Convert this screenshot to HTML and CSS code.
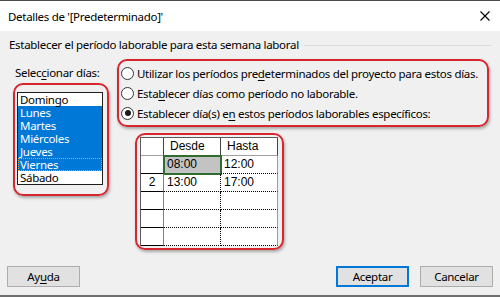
FILE: index.html
```html
<!DOCTYPE html>
<html>
<head>
<meta charset="utf-8">
<title>Detalles de '[Predeterminado]'</title>
<link rel="stylesheet" href="styles.css">
</head>
<body>
<div class="titlebar">
  <span class="title">Detalles de '[Predeterminado]'</span>
  <svg class="close" width="10" height="10" viewBox="0 0 10 10">
    <path d="M0.5 0.5 L9.5 9.5 M9.5 0.5 L0.5 9.5" stroke="#000" stroke-width="1.1" fill="none"/>
  </svg>
</div>

<div class="dialog">
  <div class="group-title">
    <span>Establecer el período laborable para esta semana laboral</span>
    <div class="rule"></div>
  </div>

  <div class="main">
    <div class="days">
      <div class="days-label">Selec<u>c</u>ionar días:</div>
      <div class="mark mark-days">
        <ul class="listbox">
          <li>Domingo</li>
          <li class="sel">Lunes</li>
          <li class="sel">Martes</li>
          <li class="sel">Miércoles</li>
          <li class="sel">Jueves</li>
          <li class="sel focus">Viernes</li>
          <li>Sábado</li>
        </ul>
      </div>
    </div>

    <div class="options">
      <div class="mark mark-radios">
        <div class="radio"><span class="dot"></span><span>Utilizar los períodos pre<u>d</u>eterminados del proyecto para estos días.</span></div>
        <div class="radio"><span class="dot"></span><span>Esta<u>b</u>lecer días como período no laborable.</span></div>
        <div class="radio"><span class="dot on"></span><span>Establecer día(s) e<u>n</u> estos períodos laborables específicos:</span></div>
      </div>

      <div class="mark mark-grid">
        <div class="grid">
          <div class="cell corner"></div>
          <div class="cell head">Desde</div>
          <div class="cell head">Hasta</div>

          <div class="cell rowhead"></div>
          <div class="cell data current">08:00</div>
          <div class="cell data last">12:00</div>

          <div class="cell rowhead">2</div>
          <div class="cell data">13:00</div>
          <div class="cell data last">17:00</div>

          <div class="cell rowhead"></div>
          <div class="cell data"></div>
          <div class="cell data last"></div>

          <div class="cell rowhead"></div>
          <div class="cell data"></div>
          <div class="cell data last"></div>

          <div class="cell rowhead"></div>
          <div class="cell data"></div>
          <div class="cell data last"></div>
        </div>
      </div>
    </div>
  </div>

  <div class="buttons">
    <button class="btn">Ay<u>u</u>da</button>
    <div class="spacer"></div>
    <button class="btn primary">Aceptar</button>
    <button class="btn">Cancelar</button>
  </div>
</div>
</body>
</html>
```

FILE: styles.css
```css
body {
  margin: 0;
  width: 500px;
  height: 297px;
  overflow: hidden;
  background: #f0f0f0;
  color: #000;
  font-family: "Noto Sans", sans-serif;
  font-size: 11.5px;
  letter-spacing: -0.3px;
}

u { text-underline-offset: 2px; }

/* window caption */
.titlebar {
  height: 30px;
  border-top: 1px solid #4b4b4b;
  background: #fff;
  display: flex;
  align-items: center;
  padding: 0 10px 0 8px;
}
.title { flex: 1; }
.close { display: block; }

.dialog {
  height: 264px;
  border-bottom: 2px solid #6e6e6e;
  display: flex;
  flex-direction: column;
}

.group-title {
  display: flex;
  align-items: center;
  height: 16px;
  line-height: 16px;
  margin: 6px 8px 0 9px;
}
.group-title .rule {
  flex: 1;
  height: 1px;
  background: #dcdcdc;
  margin-left: 5px;
}

.main {
  display: flex;
  align-items: flex-start;
  margin-top: 6px;
}

/* red call-out frames */
.mark {
  border: 2px solid #d7262d;
  border-radius: 10px;
  box-shadow: 1px 2px 3px rgba(0, 0, 0, 0.3);
}

.days { margin-left: 13px; padding-top: 6px; }
.days-label {
  padding-left: 2px;
  line-height: 16px;
  margin-bottom: 2px;
}
.mark-days { padding: 7px 4px 9px 2px; }

.listbox {
  width: 86px;
  box-sizing: border-box;
  margin: 0;
  padding: 0;
  list-style: none;
  border: 1px solid #1e1e1e;
  background: #fff;
}
.listbox li {
  height: 13px;
  line-height: 13px;
  padding-left: 2px;
}
.listbox .sel { background: #0078d7; color: #fff; }
.listbox .focus { outline: 1px dotted #f7a13a; outline-offset: -1px; }

.options { margin-left: 8px; }

.mark-radios {
  width: 372px;
  box-sizing: border-box;
  padding: 2px;
}
.radio {
  display: flex;
  align-items: center;
  height: 20px;
  white-space: nowrap;
}
.dot {
  width: 13px;
  height: 13px;
  box-sizing: border-box;
  border: 1px solid #333;
  border-radius: 50%;
  background: #fff;
  margin-right: 3px;
  display: flex;
  align-items: center;
  justify-content: center;
}
.dot.on::after {
  content: "";
  width: 6px;
  height: 6px;
  border-radius: 50%;
  background: #1a1a1a;
}

/* time grid */
.mark-grid {
  display: inline-block;
  margin: 6px 0 0 18px;
  padding: 2px 4px 2px 3px;
}
.grid {
  display: grid;
  grid-template-columns: 23px 57px 57px;
  grid-template-rows: repeat(6, 18px);
  border-top: 1px solid #5a5a5a;
  border-left: 1px solid #5a5a5a;
  background: #fff;
  font-family: "Liberation Sans", Arial, sans-serif;
  font-size: 12px;
  letter-spacing: 0;
}
.cell {
  box-sizing: border-box;
  line-height: 17px;
  padding-left: 3px;
  border-right: 1px dotted #000;
  border-bottom: 1px dotted #000;
}
.corner { border-right: 1px solid #444; border-bottom: 1px solid #a0a0a0; }
.head {
  padding-left: 6px;
  border-right: 1px solid #444;
  border-bottom: 1px solid #a0a0a0;
}
.rowhead {
  padding: 0;
  text-align: center;
  border-right: 1px solid #808080;
  border-bottom: 1px solid #000;
}
.data.last { border-right: 1px solid #a0a0a0; }
.current {
  background: #c3c3c3;
  outline: 2px solid #2f6d2f;
  outline-offset: -1px;
}

/* dialog buttons */
.buttons {
  margin-top: auto;
  display: flex;
  gap: 11px;
  padding: 0 7px 8px;
}
.spacer { flex: 1; }
.btn {
  width: 73px;
  height: 21px;
  box-sizing: border-box;
  border: 1px solid #adadad;
  background: #e1e1e1;
  font-family: inherit;
  font-size: 11.5px;
  letter-spacing: -0.3px;
  color: #000;
  padding: 0;
}
.btn.primary { border: 2px solid #0078d7; }
```
